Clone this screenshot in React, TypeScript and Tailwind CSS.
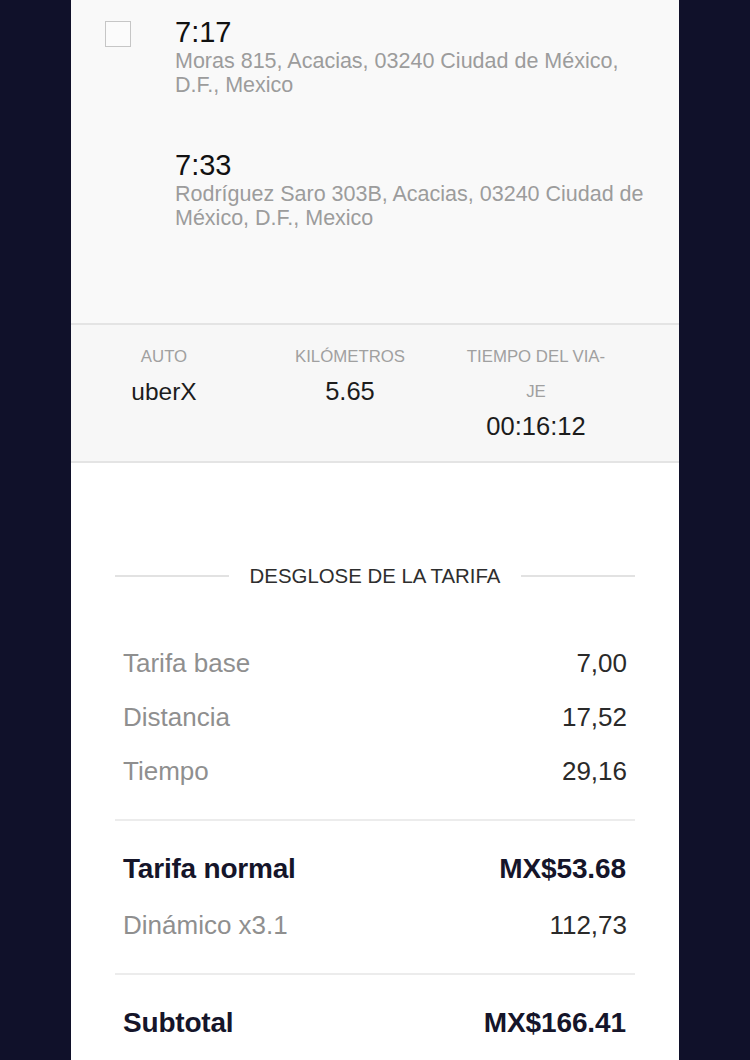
import React from "react";

const font = { fontFamily: '"Liberation Sans", Arial, sans-serif' };

function FareRow({ label, value, bold, h }: { label: string; value: string; bold?: boolean; h: string }) {
  return (
    <div className={`flex items-center justify-between px-[7px] ${h}`}>
      <span className={bold ? "text-[28px] font-bold text-[#15152a] tracking-[-0.2px]" : "text-[26px] text-[#8f8f8f]"}>{label}</span>
      <span className={bold ? "text-[28px] font-bold text-[#15152a] tracking-[-0.1px] pr-[1px]" : "text-[26px] text-[#2a2a2a]"}>{value}</span>
    </div>
  );
}

export default function App() {
  return (
    <div className="w-[750px] h-[1060px] overflow-hidden bg-[#10112a]" style={font}>
      <div className="mx-auto w-[608px] h-[1060px] bg-white">
        {/* Trip stops */}
        <div className="h-[325px] bg-[#f9f9f9] border-b-2 border-[#e4e4e4]">
          <div className="flex pt-[15px]">
            <div className="w-[104px] pl-[34px] pt-[6px]">
              <div className="w-[26px] h-[26px] border border-[#c6c6c6] bg-[#fbfbfb]" />
            </div>
            <div className="flex-1">
              <div className="text-[29px] leading-[34px] text-[#111]">7:17</div>
              <div className="text-[21.5px] leading-[24px] text-[#9c9c9c]">
                Moras 815, Acacias, 03240 Ciudad de México,
                <br />
                D.F., Mexico
              </div>
            </div>
          </div>
          <div className="flex pt-[51px]">
            <div className="w-[104px]" />
            <div className="flex-1">
              <div className="text-[29px] leading-[34px] text-[#111]">7:33</div>
              <div className="text-[21.5px] leading-[24px] text-[#9c9c9c]">
                Rodríguez Saro 303B, Acacias, 03240 Ciudad de
                <br />
                México, D.F., Mexico
              </div>
            </div>
          </div>
        </div>

        {/* Stats */}
        <div className="bg-[#f7f7f7] border-b-2 border-[#e4e4e4] pt-[14px] pb-[17px]">
          <div className="grid grid-cols-3 w-[558px] text-center">
            <div>
              <div className="text-[16.8px] leading-[35px] text-[#a0a0a0]">AUTO</div>
              <div className="text-[24.5px] leading-[35px] text-[#1c1c1c]">uberX</div>
            </div>
            <div>
              <div className="text-[16.8px] leading-[35px] text-[#a0a0a0]">KILÓMETROS</div>
              <div className="text-[25.5px] leading-[35px] text-[#1c1c1c]">5.65</div>
            </div>
            <div>
              <div className="text-[16.8px] leading-[35px] text-[#a0a0a0]">
                TIEMPO DEL VIA-
                <br />
                JE
              </div>
              <div className="text-[25.5px] leading-[35px] text-[#1c1c1c]">00:16:12</div>
            </div>
          </div>
        </div>

        {/* Fare breakdown */}
        <div className="mx-[44px] pt-[101px]">
          <div className="flex items-center gap-[21px]">
            <div className="flex-1 h-[2px] bg-[#e2e2e2]" />
            <div className="text-[20.4px] leading-[24px] text-[#2e2e2e]">DESGLOSE DE LA TARIFA</div>
            <div className="flex-1 h-[2px] bg-[#e2e2e2]" />
          </div>
          <div className="pt-[48px] px-px">
            <FareRow label="Tarifa base" value="7,00" h="h-[54px]" />
            <FareRow label="Distancia" value="17,52" h="h-[54px]" />
            <FareRow label="Tiempo" value="29,16" h="h-[54px]" />
          </div>
          <div className="mt-[21px] h-[2px] bg-[#ececec]" />
          <div className="pt-[20px] px-px">
            <FareRow label="Tarifa normal" value="MX$53.68" bold h="h-[56px]" />
            <FareRow label="Dinámico x3.1" value="112,73" h="h-[56px]" />
          </div>
          <div className="mt-[20px] h-[2px] bg-[#ececec]" />
          <div className="pt-[21px] px-px">
            <FareRow label="Subtotal" value="MX$166.41" bold h="h-[54px]" />
          </div>
        </div>
      </div>
    </div>
  );
}
